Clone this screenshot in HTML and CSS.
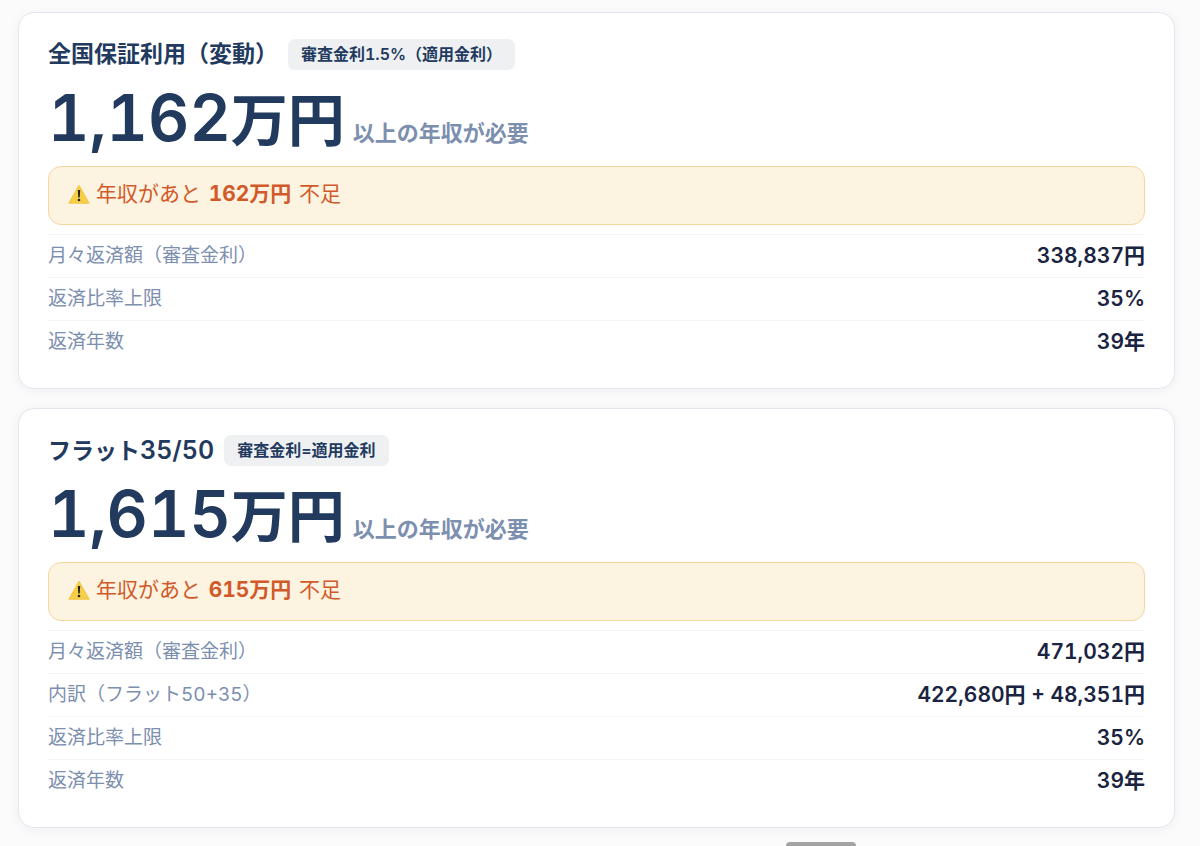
FILE: index.html
```html
<!DOCTYPE html>
<html lang="ja">
<head>
  <meta charset="UTF-8" />
  <meta name="viewport" content="width=device-width, initial-scale=1.0" />
  <title>必要年収シミュレーション</title>
  <link rel="stylesheet" href="styles.css">
</head>
<body>
  <main class="results">
    <section class="card">
      <div class="card-head">
        <h2>全国保証利用（変動）</h2>
        <span class="badge">審査金利1.5%（適用金利）</span>
      </div>
      <p class="income"><strong><span class="num">1,162</span>万円</strong><span class="note">以上の年収が必要</span></p>
      <div class="alert">
        <svg class="warn" viewBox="0 0 22 20" aria-hidden="true">
          <path d="M11 1.2 L21.2 19.2 H0.8 Z" fill="#f7cf46" stroke="#f1c64a" stroke-width="1" stroke-linejoin="round"/>
          <path d="M9.8 6 h2.4 l-0.5 7.6 h-1.4 z" fill="#222"/>
          <circle cx="11" cy="16" r="1.3" fill="#222"/>
        </svg>
        <span class="alert-text">年収があと <b>162万円</b> 不足</span>
      </div>
      <dl class="rows">
        <div class="row"><dt>月々返済額（審査金利）</dt><dd>338,837円</dd></div>
        <div class="row"><dt>返済比率上限</dt><dd>35%</dd></div>
        <div class="row"><dt>返済年数</dt><dd>39年</dd></div>
      </dl>
    </section>

    <section class="card">
      <div class="card-head">
        <h2>フラット<span class="num">35/50</span></h2>
        <span class="badge">審査金利=適用金利</span>
      </div>
      <p class="income"><strong><span class="num">1,615</span>万円</strong><span class="note">以上の年収が必要</span></p>
      <div class="alert">
        <svg class="warn" viewBox="0 0 22 20" aria-hidden="true">
          <path d="M11 1.2 L21.2 19.2 H0.8 Z" fill="#f7cf46" stroke="#f1c64a" stroke-width="1" stroke-linejoin="round"/>
          <path d="M9.8 6 h2.4 l-0.5 7.6 h-1.4 z" fill="#222"/>
          <circle cx="11" cy="16" r="1.3" fill="#222"/>
        </svg>
        <span class="alert-text">年収があと <b>615万円</b> 不足</span>
      </div>
      <dl class="rows">
        <div class="row"><dt>月々返済額（審査金利）</dt><dd>471,032円</dd></div>
        <div class="row"><dt>内訳（フラット50+35）</dt><dd>422,680円 + 48,351円</dd></div>
        <div class="row"><dt>返済比率上限</dt><dd>35%</dd></div>
        <div class="row"><dt>返済年数</dt><dd>39年</dd></div>
      </dl>
    </section>
  </main>
  <div class="handle"></div>
</body>
</html>
```

FILE: styles.css
```css
* {
  box-sizing: border-box;
}
body {
  position: relative;
  margin: 0;
  padding: 12px 25px 18px 18px;
  background: #fbfbfc;
  color: #1a2340;
  font-family: Inter, "Noto Sans CJK JP", sans-serif;
  font-variant-numeric: tabular-nums;
}
h2, p, dl, dd {
  margin: 0;
}
.results {
  display: flex;
  flex-direction: column;
  gap: 19px;
}
.card {
  padding: 26px 29px 25px;
  background: #fff;
  border: 1px solid #e3e6ed;
  border-radius: 16px;
  box-shadow: 0 2px 12px rgba(30, 40, 70, 0.05);
}
.card-head {
  display: flex;
  align-items: center;
  gap: 10px;
  height: 31px;
}
.card-head h2 {
  font-size: 23px;
  line-height: 31px;
  font-weight: 600;
  color: #223a5e;
}
.card-head .num {
  font-size: 25px;
}
.badge {
  padding: 0 13px;
  border-radius: 7px;
  background: #eef0f2;
  color: #223a5e;
  font-size: 16px;
  line-height: 31px;
  font-weight: 600;
}
.income {
  display: flex;
  align-items: baseline;
  gap: 8px;
  height: 96px;
  line-height: 96px;
  color: #223a5e;
}
.income strong {
  font-size: 57px;
  font-weight: 700;
}
.income .num {
  font-size: 64px;
  font-weight: 600;
}
.income .note {
  font-size: 22px;
  font-weight: 600;
  color: #7d8fae;
}
.alert {
  display: flex;
  align-items: center;
  gap: 6px;
  height: 59px;
  padding: 0 19px 3px;
  margin-bottom: 9px;
  background: #fdf3e1;
  border: 1px solid #f5d69f;
  border-radius: 13px;
  color: #d15a2a;
  font-size: 21px;
  line-height: 56px;
}
.alert b {
  margin: 0 2px;
  font-weight: 700;
}
.warn {
  width: 22px;
  height: 20px;
}
.row {
  display: flex;
  align-items: center;
  justify-content: space-between;
  height: 43px;
  border-top: 1px solid #f3f5f8;
  line-height: 42px;
}
.row dt {
  font-size: 19px;
  color: #7d8fae;
}
.row dd {
  font-size: 21px;
  font-weight: 600;
}
.handle {
  position: absolute;
  left: 786px;
  bottom: 0;
  width: 70px;
  height: 4px;
  border-radius: 4px 4px 0 0;
  background: #a3a3a3;
}
```
